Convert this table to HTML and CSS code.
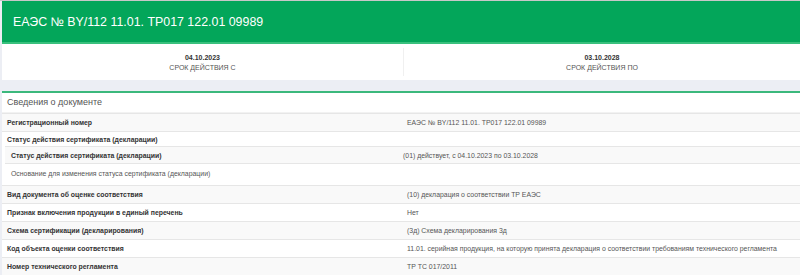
FILE: index.html
```html
<!DOCTYPE html>
<html lang="ru">
<head>
<meta charset="utf-8">
<title>ЕАЭС № BY/112 11.01. ТР017 122.01 09989</title>
<link rel="stylesheet" href="styles.css">
</head>
<body>
<div class="page">
  <header class="title-bar">ЕАЭС № BY/112 11.01. ТР017 122.01 09989</header>
  <div class="dates">
    <div class="date-cell">
      <div class="date">04.10.2023</div>
      <div class="date-label">СРОК ДЕЙСТВИЯ С</div>
    </div>
    <div class="date-cell">
      <div class="date">03.10.2028</div>
      <div class="date-label">СРОК ДЕЙСТВИЯ ПО</div>
    </div>
  </div>
  <section class="box">
    <h2 class="box-title">Сведения о документе</h2>
    <table class="info">
      <tr class="odd"><th>Регистрационный номер</th><td>ЕАЭС № BY/112 11.01. ТР017 122.01 09989</td></tr>
      <tr class="group">
        <td colspan="2">
          <div class="group-title">Статус действия сертификата (декларации)</div>
          <table class="info nested">
            <tr class="odd"><th>Статус действия сертификата (декларации)</th><td>(01) действует, с 04.10.2023 по 03.10.2028</td></tr>
            <tr><td class="plain">Основание для изменения статуса сертификата (декларации)</td><td></td></tr>
          </table>
        </td>
      </tr>
      <tr class="odd"><th>Вид документа об оценке соответствия</th><td>(10) декларация о соответствии ТР ЕАЭС</td></tr>
      <tr><th>Признак включения продукции в единый перечень</th><td>Нет</td></tr>
      <tr class="odd"><th>Схема сертификации (декларирования)</th><td>(3д) Схема декларирования 3д</td></tr>
      <tr><th>Код объекта оценки соответствия</th><td>11.01. серийная продукция, на которую принята декларация о соответствии требованиям технического регламента</td></tr>
      <tr class="odd"><th>Номер технического регламента</th><td>ТР ТС 017/2011</td></tr>
    </table>
  </section>
</div>
</body>
</html>
```

FILE: styles.css
```css
html, body {
  margin: 0;
  padding: 0;
}
body {
  background: #eceef4;
  font-family: "Liberation Sans", Arial, sans-serif;
  color: #333;
  border-top: 1px solid #c8c8c8;
}
.page {
  padding-left: 2px;
}
.title-bar {
  background: #03a65a;
  color: #fff;
  font-size: 12.4px;
  height: 41px;
  line-height: 42px;
  padding-left: 11px;
  border-bottom: 2px solid #39c07d;
}
.dates {
  display: grid;
  grid-template-columns: 401px 1fr;
  background: #fff;
  height: 36px;
}
.date-cell {
  display: flex;
  flex-direction: column;
  align-items: center;
  justify-content: center;
  padding-top: 2px;
}
.date-cell + .date-cell {
  border-left: 1px solid #f0f0f0;
  margin: 4px 0;
}
.date {
  font-size: 7px;
  font-weight: bold;
  color: #333;
  line-height: 10px;
}
.date-label {
  font-size: 7px;
  color: #555;
  line-height: 10px;
}
.box {
  margin-top: 11px;
  background: #fff;
  border-top: 2px solid #3bb87c;
}
.box-title {
  margin: 0;
  font-weight: normal;
  font-size: 9px;
  color: #555;
  height: 19px;
  line-height: 18px;
  padding-left: 5px;
  border-bottom: 1px solid #f2f2f2;
}
.info {
  width: 100%;
  border-collapse: collapse;
  font-size: 6.9px;
}
.info th, .info td {
  text-align: left;
  padding: 0 5px;
  height: 17px;
  border-top: 1px solid #e6e6e6;
  vertical-align: middle;
}
.info th {
  width: 390px;
  font-weight: bold;
  color: #333;
}
.info td {
  color: #555;
}
.info tr.odd > th, .info tr.odd > td {
  background: #f9f9f9;
}
.info tr.group > td {
  padding: 0;
  height: auto;
}
.group-title {
  font-weight: bold;
  color: #333;
  padding: 0 5px;
  height: 14px;
  line-height: 16px;
}
.nested {
  width: calc(100% - 3px);
  margin-left: 3px;
  margin-bottom: 3px;
}
.nested th, .nested td {
  height: 16px;
}
.nested th {
  width: 382px;
  padding-left: 6px;
}
.nested td.plain {
  padding-left: 6px;
  height: 18px;
  color: #555;
}
```
